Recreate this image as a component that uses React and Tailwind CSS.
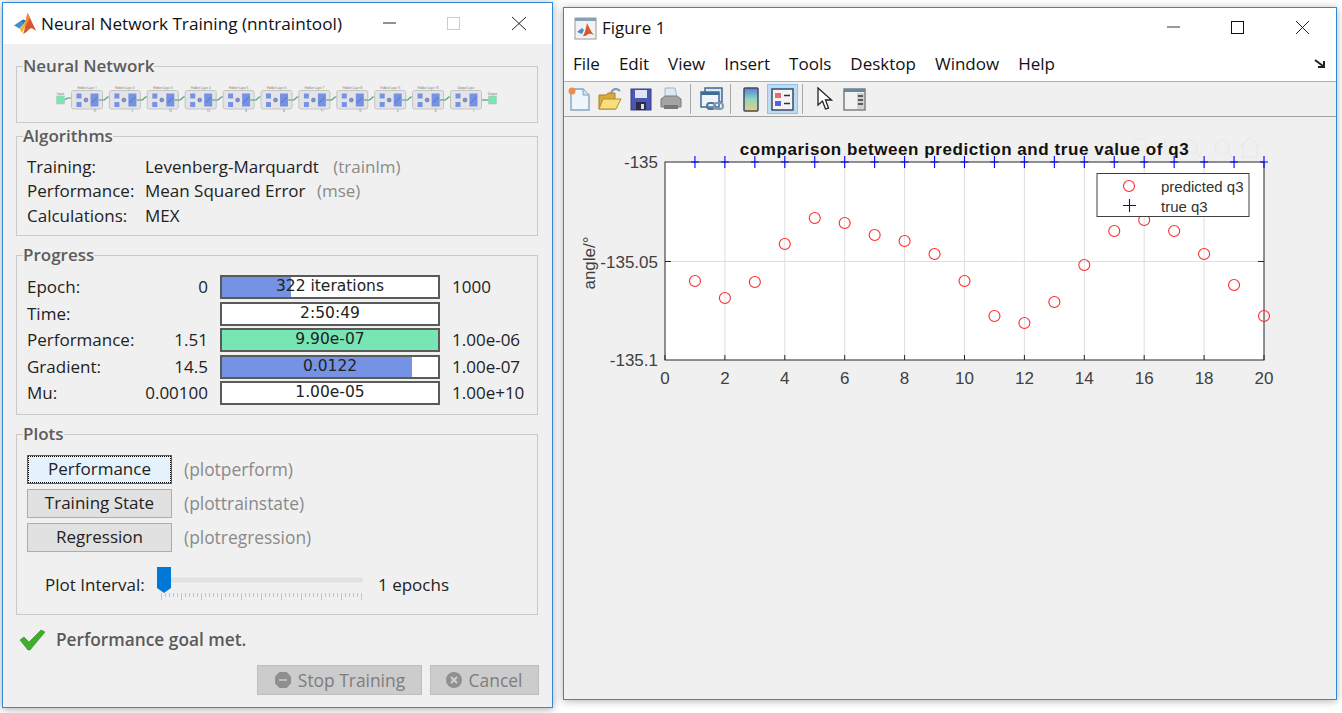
import React from 'react';

function MatlabLogo({ size = 24 }) {
  return (
    <svg width={size} height={size} viewBox="0 0 24 24">
      <path d="M1 13.5 L7.5 9 L10.5 12 L6.5 16.5 Z" fill="#3f8fc9" />
      <path d="M6.5 16.5 L10.5 12 L13 9 L11.5 16 L9 21 Z" fill="#f0b43a" />
      <path d="M7.5 9 L10.5 12 L13 8.5 L10.5 7.5 Z" fill="#2f6fa8" />
      <path d="M14.5 1 C16.5 4 20.5 14 23.5 19 C20.5 17.5 18.5 15 16.5 17 C14 19.5 12 21.5 10 22 C12.5 17 12.5 9 14.5 1 Z" fill="#d9562a" />
      <path d="M14.5 1 C13.5 5 12.8 9 11.5 16 C13.5 13 15.5 9 16.8 5.5 Z" fill="#f08a32" />
    </svg>
  );
}

function Field({ title, className, children }) {
  return (
    <fieldset className={`w-[522px] border border-[#c9c9c9] ${className}`}>
      <legend className="ml-[6px] font-semibold text-[17px] leading-[20px] text-[#5c5c5c]">{title}</legend>
      {children}
    </fieldset>
  );
}

// small network picture in the first panel
function NetworkDiagram() {
  const blocks = Array.from({ length: 11 }, (_, i) => 71.5 + i * 37.9);
  const sizes = ['10', '5', '13', '13', '8', '8', '11', '13', '6', '8', '1'];
  return (
    <svg width="520" height="46" viewBox="17 75 520 46" className="block">
      <path d="M64 99 L68 97 L72 97" fill="none" stroke="#3fa37a" strokeWidth="1.2" />
      <line x1="481" y1="99" x2="489" y2="99" stroke="#3fa37a" strokeWidth="1.2" />
      <rect x="56.5" y="95" width="8" height="8" fill="#78e6b4" stroke="#bbb" strokeWidth="0.5" />
      <rect x="488.5" y="95" width="8" height="8" fill="#78e6b4" stroke="#bbb" strokeWidth="0.5" />
      <text x="60.5" y="93.5" fontSize="2.8" textAnchor="middle" fill="#666">Input</text>
      <text x="492.5" y="93.5" fontSize="2.8" textAnchor="middle" fill="#666">Output</text>
      {blocks.map((x, i) => (
        <g key={x}>
          <rect x={x} y="89.5" width="31" height="18.5" rx="2" fill="#e4e4e4" stroke="#c4c4c4" strokeWidth="1" />
          <rect x={x + 5} y="92.5" width="5" height="5" fill="#7692e4" />
          <rect x={x + 5} y="101" width="5" height="5" fill="#7692e4" />
          <circle cx={x + 14.5} cy="99" r="2" fill="#7692e4" stroke="#555" strokeWidth="0.4" />
          <rect x={x + 19} y="92.5" width="8" height="13" fill="#7692e4" />
          <line x1={x + 20} y1="102" x2={x + 26} y2="96" stroke="#3b4f8f" strokeWidth="0.5" />
          <path d={`M${x + 27} 99 H${x + 33} L${x + 36} 96 H${x + 38}`} fill="none" stroke="#3fa37a" strokeWidth="1.2" opacity={i === 10 ? 0 : 1} />
          <text x={x + 15.5} y="87.5" fontSize="2.8" textAnchor="middle" fill="#666">
            {i === 10 ? 'Output Layer' : `Hidden Layer ${i + 1}`}
          </text>
          <text x={x + 23} y="111" fontSize="2.8" textAnchor="middle" fill="#666">{sizes[i]}</text>
        </g>
      ))}
    </svg>
  );
}

function ProgressRow({ label, left, text, right, fill, color }) {
  return (
    <div className="flex items-center h-[24px]">
      <span className="w-[110px]">{label}</span>
      <span className="w-[71px] text-right">{left}</span>
      <div className="relative ml-[12px] w-[220px] h-full border-2 border-[#5a5a5a] bg-white">
        {fill && <div className={`h-full ${color}`} style={{ width: fill }} />}
        <span className="absolute inset-0 flex items-center justify-center text-[#222] font-['DejaVu_Sans',sans-serif] text-[15.5px]">{text}</span>
      </div>
      <span className="ml-[12px]">{right}</span>
    </div>
  );
}

function PlotButton({ label, hint, focused }) {
  return (
    <div className="flex items-center h-[29px]">
      <div className={`flex items-center justify-center w-[145px] h-full border ${focused ? 'bg-[#e5f1fb] border-[#0078d7]' : 'bg-[#e1e1e1] border-[#adadad]'}`}>
        <div className={`flex items-center justify-center w-full h-full pb-[1px] ${focused ? 'border border-dotted border-black' : ''}`}>{label}</div>
      </div>
      <span className="ml-[12px] text-[17.4px] text-[#8a8a8a]">{hint}</span>
    </div>
  );
}

function SliderGraphic() {
  const ticks = Array.from({ length: 51 }, (_, i) => i);
  return (
    <svg width="210" height="36" viewBox="156 566 210 36" className="block">
      <rect x="165" y="578" width="197" height="4" fill="#e2e2e2" stroke="#d6d6d6" strokeWidth="0.5" />
      {ticks.map((i) => {
        const x = 161.5 + i * 4;
        const long = i % 5 === 0;
        return <line key={i} x1={x} y1="593" x2={x} y2={long ? 600 : 597} stroke="#c4c4c4" strokeWidth="1" />;
      })}
      <path d="M157 567 H171 V588 L164 593 L157 588 Z" fill="#0078d7" />
    </svg>
  );
}

function TrainingWindow() {
  return (
    <div className="flex flex-col w-[551px] h-[706px] border border-[#2e8ad8] bg-[#f0f0f0] text-[17px] text-[#222] shadow-[0_1px_8px_rgba(0,0,0,0.35)]">
      <div className="flex items-center h-[41px] bg-white pl-[10px]">
        <MatlabLogo size={24} />
        <span className="ml-[4px] text-[17.2px] text-[#111]">Neural Network Training (nntraintool)</span>
        <svg width="170" height="41" viewBox="381 3 170 41" className="ml-auto">
          <line x1="382" y1="23" x2="395" y2="23" stroke="#222" strokeWidth="1" />
          <rect x="446.5" y="17.5" width="12" height="12" fill="none" stroke="#ccc" />
          <path d="M511 17 L525 30 M525 17 L511 30" stroke="#222" strokeWidth="1" />
        </svg>
      </div>
      <div className="flex flex-col px-[13px] pt-[12px]">
        <Field title="Neural Network" className="h-[67px]">
          <NetworkDiagram />
        </Field>
        <Field title="Algorithms" className="h-[110px] mt-[3px]">
          <div className="grid grid-cols-[118px_1fr] auto-rows-[24.5px] items-center pl-[10px] pt-[8px]">
            <span>Training:</span>
            <span>Levenberg-Marquardt <span className="ml-[10px] text-[#8a8a8a]">(trainlm)</span></span>
            <span>Performance:</span>
            <span>Mean Squared Error <span className="ml-[7px] text-[#8a8a8a]">(mse)</span></span>
            <span>Calculations:</span>
            <span>MEX</span>
          </div>
        </Field>
        <Field title="Progress" className="h-[170px] mt-[9px]">
          <div className="flex flex-col gap-[2.5px] pl-[10px] pt-[10px]">
            <ProgressRow label="Epoch:" left="0" text="322 iterations" right="1000" fill="32%" color="bg-[#7692e4]" />
            <ProgressRow label="Time:" left="" text="2:50:49" right="" />
            <ProgressRow label="Performance:" left="1.51" text="9.90e-07" right="1.00e-06" fill="100%" color="bg-[#78e6b4]" />
            <ProgressRow label="Gradient:" left="14.5" text="0.0122" right="1.00e-07" fill="88%" color="bg-[#7692e4]" />
            <ProgressRow label="Mu:" left="0.00100" text="1.00e-05" right="1.00e+10" />
          </div>
        </Field>
        <Field title="Plots" className="h-[191px] mt-[9px]">
          <div className="flex flex-col gap-[5px] pl-[10px] pt-[11px]">
            <PlotButton label="Performance" hint="(plotperform)" focused />
            <PlotButton label="Training State" hint="(plottrainstate)" />
            <PlotButton label="Regression" hint="(plotregression)" />
          </div>
          <div className="flex items-center h-[36px] mt-[14px] pl-[28px]">
            <span className="w-[111px] pt-[1px]">Plot Interval:</span>
            <SliderGraphic />
            <span className="ml-[12px] pt-[1px]">1 epochs</span>
          </div>
        </Field>
      </div>
      <div className="flex items-center h-[30px] mt-[10px] pl-[16px]">
        <svg width="26" height="22" viewBox="0 0 26 22">
          <path d="M1 11 L5 8 L10 13 L22 1 L26 3 L11 21 L9 21 Z" fill="#3fae2a" stroke="#2b8a1e" strokeWidth="0.6" />
        </svg>
        <span className="ml-[11px] font-semibold text-[17.3px] text-[#5a5a5a]">Performance goal met.</span>
      </div>
      <div className="flex justify-end gap-[8px] pr-[13px] mt-[10px] text-[17.4px] text-[#7d7d7d]">
        <div className="flex items-center justify-center gap-[6px] w-[165px] h-[30px] bg-[#cccccc] border border-[#bfbfbf]">
          <svg width="18" height="18" viewBox="0 0 18 18">
            <path d="M5.5 1 H12.5 L17 5.5 V12.5 L12.5 17 H5.5 L1 12.5 V5.5 Z" fill="#8f8f8f" />
            <rect x="5" y="8" width="8" height="2" fill="#bdbdbd" />
          </svg>
          <span>Stop Training</span>
        </div>
        <div className="flex items-center justify-center gap-[6px] w-[109px] h-[30px] pr-[2px] bg-[#cccccc] border border-[#bfbfbf]">
          <svg width="18" height="18" viewBox="0 0 18 18">
            <circle cx="9" cy="9" r="8" fill="#8f8f8f" />
            <path d="M6 6 L12 12 M12 6 L6 12" stroke="#cfcfcf" strokeWidth="2" />
          </svg>
          <span>Cancel</span>
        </div>
      </div>
    </div>
  );
}

function ToolSep() {
  return <div className="w-px h-[30px] bg-[#a8a8a8]" />;
}

function Toolbar() {
  return (
    <div className="flex items-center h-[35px] pl-[3px] bg-[#f0f0f0] border-b border-[#a0a0a0]">
      <svg width="24" height="28" viewBox="0 0 24 28">
        <path d="M4 4 H16 L22 10 V25 H4 Z" fill="#eef5fb" stroke="#7fa6c6" strokeWidth="1.4" />
        <path d="M16 4 V10 H22" fill="#cfe0ee" stroke="#7fa6c6" />
        <circle cx="5" cy="6" r="3.5" fill="#f08a4a" />
      </svg>
      <svg width="26" height="28" viewBox="0 0 26 28" className="ml-[6px]">
        <path d="M2 10 H9 L11 8 H18 V24 H2 Z" fill="#d9ab3a" stroke="#a87f20" />
        <path d="M2 24 L6 14 H24 L19 24 Z" fill="#f7de7e" stroke="#b48c2a" />
        <path d="M14 8 C16 3 20 3 23 6" fill="none" stroke="#7a98b4" strokeWidth="2" />
      </svg>
      <svg width="24" height="28" viewBox="0 0 24 28" className="ml-[6px]">
        <rect x="2" y="4" width="20" height="21" fill="#4a55b8" stroke="#3a3f80" />
        <rect x="6" y="5" width="12" height="8" fill="#dfe4f2" />
        <rect x="7" y="17" width="10" height="8" fill="#2c2c3c" />
        <rect x="12" y="19" width="3" height="5" fill="#dddddd" />
      </svg>
      <svg width="24" height="28" viewBox="0 0 24 28" className="ml-[6px]">
        <path d="M6 3 H16 L18 12 H6 Z" fill="#dfe8f0" stroke="#a8b4be" />
        <path d="M2 14 L6 11 H18 L22 14 V22 H2 Z" fill="#a4a4a4" stroke="#7c7c7c" />
        <rect x="5" y="20" width="14" height="4" fill="#777" />
      </svg>
      <div className="ml-[7px]"><ToolSep /></div>
      <svg width="26" height="28" viewBox="0 0 26 28" className="ml-[8px]">
        <rect x="6" y="3" width="17" height="14" fill="#dbe7f2" stroke="#3e6a94" strokeWidth="1.5" />
        <rect x="2" y="7" width="18" height="15" fill="#eef4fa" stroke="#3e6a94" strokeWidth="1.5" />
        <rect x="2" y="7" width="18" height="3" fill="#3e6a94" />
        <rect x="8" y="18" width="8" height="6" rx="3" fill="none" stroke="#4f7396" strokeWidth="2" />
        <rect x="15" y="18" width="9" height="6" rx="3" fill="none" stroke="#7f9ab2" strokeWidth="2" />
      </svg>
      <div className="ml-[5px]"><ToolSep /></div>
      <svg width="18" height="28" viewBox="0 0 18 28" className="ml-[11px]">
        <defs>
          <linearGradient id="colorbar-grad" x1="0" y1="0" x2="0" y2="1">
            <stop offset="0" stopColor="#5a7fd8" />
            <stop offset="0.5" stopColor="#8fd8c0" />
            <stop offset="1" stopColor="#f5c878" />
          </linearGradient>
        </defs>
        <rect x="2" y="3" width="14" height="23" rx="1" fill="url(#colorbar-grad)" stroke="#3c4a66" strokeWidth="1.5" />
      </svg>
      <div className="flex items-center justify-center ml-[7px] w-[31px] h-[30px] bg-[#bcdcf4] border border-[#8cc4ec]">
        <svg width="23" height="23" viewBox="0 0 23 23">
          <rect x="1" y="1" width="21" height="21" fill="#f4f4f4" stroke="#3c4a66" strokeWidth="1.5" />
          <rect x="4" y="5" width="6" height="5" fill="#ee6a6a" />
          <rect x="4" y="13" width="6" height="5" fill="#5a5ee0" />
          <path d="M13 7.5 H19 M13 15.5 H19" stroke="#333" strokeWidth="1.5" />
        </svg>
      </div>
      <div className="ml-[4px]"><ToolSep /></div>
      <svg width="18" height="28" viewBox="0 0 18 28" className="ml-[13px]">
        <path d="M2 3 L2 20 L6.5 16 L9.5 24 L12.5 23 L9.5 15 L15.5 15 Z" fill="#fff" stroke="#222" strokeWidth="1.3" />
      </svg>
      <svg width="23" height="28" viewBox="0 0 23 28" className="ml-[9px]">
        <rect x="1" y="4" width="21" height="21" fill="#f2f2f2" stroke="#6c6c6c" strokeWidth="1.3" />
        <rect x="1" y="4" width="21" height="3" fill="#5e8aa8" />
        <rect x="14" y="8" width="7" height="16" fill="#d0d0d0" />
        <path d="M15 11 H20 M15 15 H20 M15 19 H20" stroke="#333" strokeWidth="1.3" />
      </svg>
    </div>
  );
}

const predicted = [281, 298, 282, 244, 218, 223, 235, 241, 254, 281, 316, 323, 302, 265, 231, 220, 231, 254, 285, 316];

// chart coordinates below are the page pixels, via the viewBox
function Plot() {
  const xAt = (v) => 665 + v * 29.95;
  const evens = [0, 2, 4, 6, 8, 10, 12, 14, 16, 18, 20];
  const yLabels = [['-135', 168], ['-135.05', 268], ['-135.1', 366]];
  return (
    <svg width="772" height="290" viewBox="564 117 772 290" className="block font-['Liberation_Sans',sans-serif]">
      <g fill="none" stroke="#e8e8e8" strokeWidth="1.2">
        <path d="M1118 140 L1112 146 L1118 152 M1134 139 H1146 V151 H1134 Z M1165 139 V153 H1176 V143 M1190 140 a7 7 0 1 0 .1 0 M1196 152 L1201 157 M1222 140 a7 7 0 1 0 .1 0 M1228 152 L1233 157 M1240 147 L1250 137 L1260 147 M1243 145 V157 H1257 V145" />
      </g>
      <rect x="665" y="162" width="599" height="198" fill="#fff" />
      {evens.slice(1, 10).map((v) => (
        <line key={v} x1={xAt(v)} y1="162" x2={xAt(v)} y2="360" stroke="#dedede" />
      ))}
      <line x1="665" y1="261.5" x2="1264" y2="261.5" stroke="#dedede" />
      <rect x="665" y="162" width="599" height="198" fill="none" stroke="#262626" />
      {evens.map((v) => (
        <g key={v}>
          <line x1={xAt(v)} y1="360" x2={xAt(v)} y2="355" stroke="#262626" />
          <text x={xAt(v)} y="384" fontSize="17" textAnchor="middle" fill="#404040">{v}</text>
        </g>
      ))}
      <path d="M665 261.5 H671 M1264 261.5 H1258" stroke="#262626" />
      {yLabels.map(([t, y]) => (
        <text key={t} x="658" y={y} fontSize="17" textAnchor="end" fill="#404040">{t}</text>
      ))}
      <text transform="translate(595 263) rotate(-90)" fontSize="17" textAnchor="middle" fill="#404040">angle/°</text>
      {predicted.map((y, i) => (
        <circle key={i} cx={xAt(i + 1)} cy={y} r="5.5" fill="none" stroke="#ff2a2a" strokeWidth="1.1" />
      ))}
      {predicted.map((_, i) => (
        <path key={i} d={`M${xAt(i + 1) - 4} 162 H${xAt(i + 1) + 4} M${xAt(i + 1)} 156 V168`} stroke="#0000ff" fill="none" strokeWidth="1.1" />
      ))}
      <text x="964.5" y="155" fontSize="17" fontWeight="bold" textAnchor="middle" fill="#111" letterSpacing="0.56">comparison between prediction and true value of q3</text>
      <rect x="1097" y="173.5" width="152" height="43" fill="#fff" stroke="#404040" />
      <circle cx="1129" cy="186" r="5.5" fill="none" stroke="#ff2a2a" strokeWidth="1.1" />
      <path d="M1123 205.5 H1136 M1129.5 199 V212" stroke="#0000ff" strokeWidth="1.1" />
      <text x="1161" y="192" fontSize="15" fill="#333">predicted q3</text>
      <text x="1161" y="212" fontSize="15" fill="#333">true q3</text>
    </svg>
  );
}

function FigureWindow() {
  const menus = ['File', 'Edit', 'View', 'Insert', 'Tools', 'Desktop', 'Window', 'Help'];
  return (
    <div className="flex flex-col w-[774px] h-[693px] mt-[5px] ml-[10px] border border-[#2e8ad8] bg-[#f0f0f0] text-[#111] shadow-[0_1px_8px_rgba(0,0,0,0.3)]">
      <div className="flex items-center h-[42px] bg-white pl-[10px] pb-[2px]">
        <svg width="23" height="23" viewBox="0 0 23 23">
          <rect x="1" y="1" width="21" height="21" fill="#f2f2f2" stroke="#9a9a9a" />
          <rect x="1" y="1" width="21" height="3" fill="#8aa0b4" />
          <path d="M3 15 L8 11 L10 13 L8 17 Z" fill="#3f8fc9" />
          <path d="M13 6 C15 10 17 15 20 18 C17 17 15 16 13 18 C12 19 10 19 9 19 C11 16 12 11 13 6 Z" fill="#d9562a" />
        </svg>
        <span className="ml-[5px] text-[17px]">Figure 1</span>
        <svg width="170" height="40" viewBox="1167 8 170 40" className="ml-auto">
          <line x1="1168" y1="27" x2="1181" y2="27" stroke="#333" strokeWidth="1" />
          <rect x="1232.5" y="21.5" width="12" height="12" fill="none" stroke="#111" />
          <path d="M1297 21 L1310 34 M1310 21 L1297 34" stroke="#222" strokeWidth="1" />
        </svg>
      </div>
      <div className="flex items-center h-[32px] bg-white pl-[9px] pr-[10px] pb-[3px] border-b border-[#b0b0b0] text-[17px]">
        <div className="flex gap-[19px]">
          {menus.map((m) => <span key={m}>{m}</span>)}
        </div>
        <svg width="12" height="10" viewBox="0 0 12 10" className="ml-auto">
          <path d="M1 1 L9 7 M10 2 V8 H4" fill="none" stroke="#222" strokeWidth="2" />
        </svg>
      </div>
      <Toolbar />
      <Plot />
    </div>
  );
}

export default function App() {
  return (
    <div className="flex items-start w-[1342px] h-[713px] overflow-hidden bg-white pt-[2px] pl-[2px] font-['Open_Sans',sans-serif]">
      <TrainingWindow />
      <FigureWindow />
    </div>
  );
}
